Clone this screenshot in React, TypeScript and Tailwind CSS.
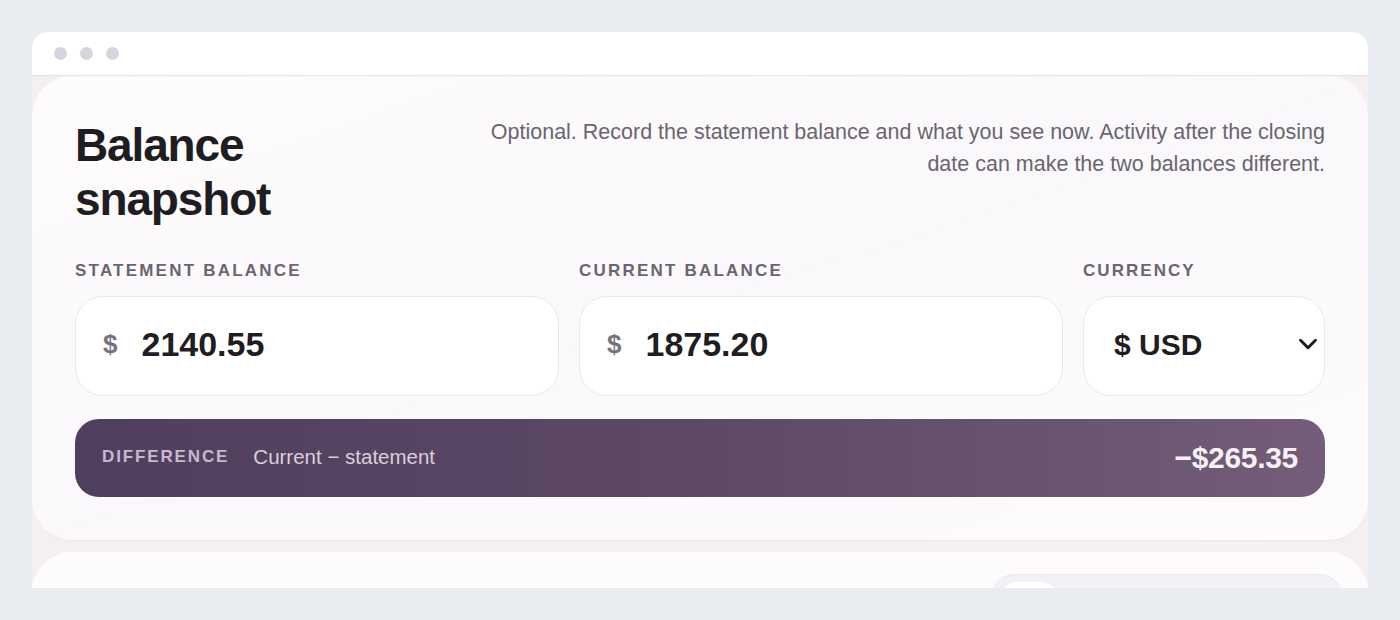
import { ChevronDown } from 'lucide-react'

const fields = [
  { label: 'Statement balance', value: '2140.55' },
  { label: 'Current balance', value: '1875.20' },
]

function MoneyField({ label, value }: { label: string; value: string }) {
  return (
    <div className="flex flex-col gap-[13px]">
      <span className="text-[17px] leading-6 font-bold uppercase tracking-[0.13em] text-[#6b6570]">{label}</span>
      <div className="flex h-[100px] items-center gap-[24px] rounded-[28px] border border-[#ebe8ea] bg-white pb-[3px] pl-[27px] pr-6">
        <span className="text-[26px] font-bold text-[#77727a]">$</span>
        <span className="text-[34px] font-bold text-[#1f1d22]">{value}</span>
      </div>
    </div>
  )
}

export default function App() {
  return (
    <div className="min-h-screen bg-[#e9ecf1] p-8 font-['Liberation_Sans',Arial,sans-serif]">
      <div className="flex h-[556px] flex-col overflow-hidden rounded-t-2xl bg-white">
        {/* window chrome */}
        <div className="flex h-[44px] shrink-0 items-center gap-[13px] border-b border-[#e4e4e8] pl-[22px]">
          <span className="h-[13px] w-[13px] rounded-full bg-[#d3d6dd]" />
          <span className="h-[13px] w-[13px] rounded-full bg-[#d3d6dd]" />
          <span className="h-[13px] w-[13px] rounded-full bg-[#d3d6dd]" />
        </div>

        <div className="flex flex-1 flex-col gap-3 overflow-hidden bg-[#f4f0f2]">
          {/* balance snapshot card */}
          <section className="shrink-0 rounded-[40px] bg-gradient-to-br from-[#fdfbfc] via-[#faf8fa] to-[#fdfbfc] p-[43px] shadow-[0_1px_2px_rgba(60,40,60,0.04)]">
            <div className="flex items-start justify-between gap-10">
              <h2 className="-mt-px w-[300px] shrink-0 text-[46px] leading-[54px] font-bold tracking-[-0.025em] text-[#1f1d22]">
                Balance snapshot
              </h2>
              <p className="-mt-[3px] max-w-[845px] text-right text-[21.5px] leading-8 text-[#6b6570]">
                Optional. Record the statement balance and what you see now. Activity after the closing date can make the two balances different.
              </p>
            </div>

            <div className="mt-[33px] grid grid-cols-[2fr_2fr_1fr] gap-5">
              {fields.map((f) => (
                <MoneyField key={f.label} label={f.label} value={f.value} />
              ))}
              <div className="flex flex-col gap-[13px]">
                <span className="text-[17px] leading-6 font-bold uppercase tracking-[0.12em] text-[#6b6570]">Currency</span>
                <div className="flex h-[100px] items-center justify-between rounded-[28px] border border-[#ebe8ea] bg-white pb-[4px] pl-[30px] pr-[1px]">
                  <span className="text-[30px] font-bold text-[#1f1d22]">$ USD</span>
                  <ChevronDown size={30} strokeWidth={2.4} className="text-[#1f1d22]" />
                </div>
              </div>
            </div>

            <div className="mt-[23px] flex h-[78px] items-center justify-between rounded-[24px] bg-gradient-to-r from-[#503e5d] via-[#5d4966] to-[#735d78] px-[27px] pb-[2px]">
              <div className="flex items-center gap-6">
                <span className="text-[17px] font-bold uppercase tracking-[0.11em] text-[#c7b9cc]">Difference</span>
                <span className="text-[20.5px] text-[#d9cfdc]">Current − statement</span>
              </div>
              <span className="text-[30px] font-bold tracking-[-0.01em] text-[#f8f1f6]">−$265.35</span>
            </div>
          </section>

          {/* next card, cut off by the window */}
          <section className="flex h-[100px] shrink-0 justify-end rounded-[40px] bg-[#fdfbfc] px-[26px] pt-[22px]">
            <div className="flex h-[48px] w-[350px] items-start rounded-[22px] border border-[#ece8eb] bg-[#f4f1f4] p-[7px]">
              <span className="h-[34px] w-[58px] rounded-[17px] bg-white" />
            </div>
          </section>
        </div>
      </div>
    </div>
  )
}
